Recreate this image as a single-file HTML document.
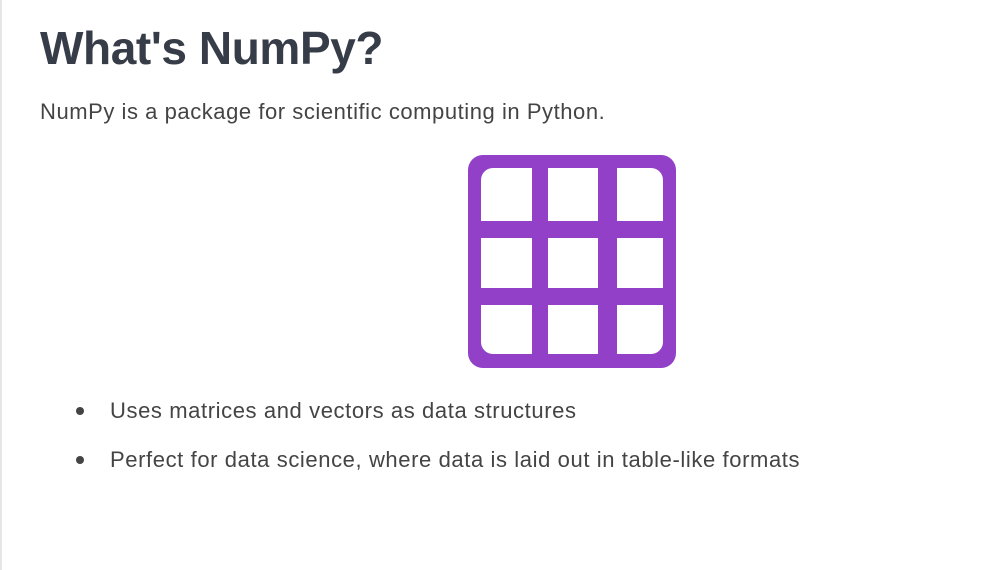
<!DOCTYPE html>
<html><head><style>
html,body{margin:0;padding:0;background:#fff;}
body{width:985px;height:570px;position:relative;overflow:hidden;font-family:"Liberation Sans",sans-serif;}
.edge{position:absolute;left:0;top:0;width:2px;height:570px;background:#e6e6e6;}
h1{position:absolute;left:40px;top:18px;margin:0;font-size:46px;font-weight:bold;color:#373d48;letter-spacing:-0.4px;line-height:60px;}
.p{position:absolute;left:40px;top:98px;font-size:22px;color:#444;line-height:28px;letter-spacing:0.55px;}
.li{position:absolute;left:110px;font-size:22px;color:#444;line-height:28px;letter-spacing:0.6px;}
.dot{position:absolute;left:76px;width:8px;height:8px;border-radius:50%;background:#444;}
</style></head><body>
<div class="edge"></div>
<h1>What's NumPy?</h1>
<div class="p">NumPy is a package for scientific computing in Python.</div>
<svg style="position:absolute;left:0;top:0" width="985" height="570">
<path fill="#9340c8" fill-rule="evenodd" d="M483 155H661A15 15 0 0 1 676 170V353A15 15 0 0 1 661 368H483A15 15 0 0 1 468 353V170A15 15 0 0 1 483 155Z
M493 168H532V221H481V180A12 12 0 0 1 493 168Z
M548 168H598V221H548Z
M617 168H651A12 12 0 0 1 663 180V221H617Z
M481 238H532V288H481Z
M548 238H598V288H548Z
M617 238H663V288H617Z
M481 305H532V354H493A12 12 0 0 1 481 342Z
M548 305H598V354H548Z
M617 305H663V342A12 12 0 0 1 651 354H617Z"/>
</svg>
<div class="dot" style="top:407px"></div>
<div class="li" style="top:397px">Uses matrices and vectors as data structures</div>
<div class="dot" style="top:456px"></div>
<div class="li" style="top:446px">Perfect for data science, where data is laid out in table-like formats</div>
</body></html>
